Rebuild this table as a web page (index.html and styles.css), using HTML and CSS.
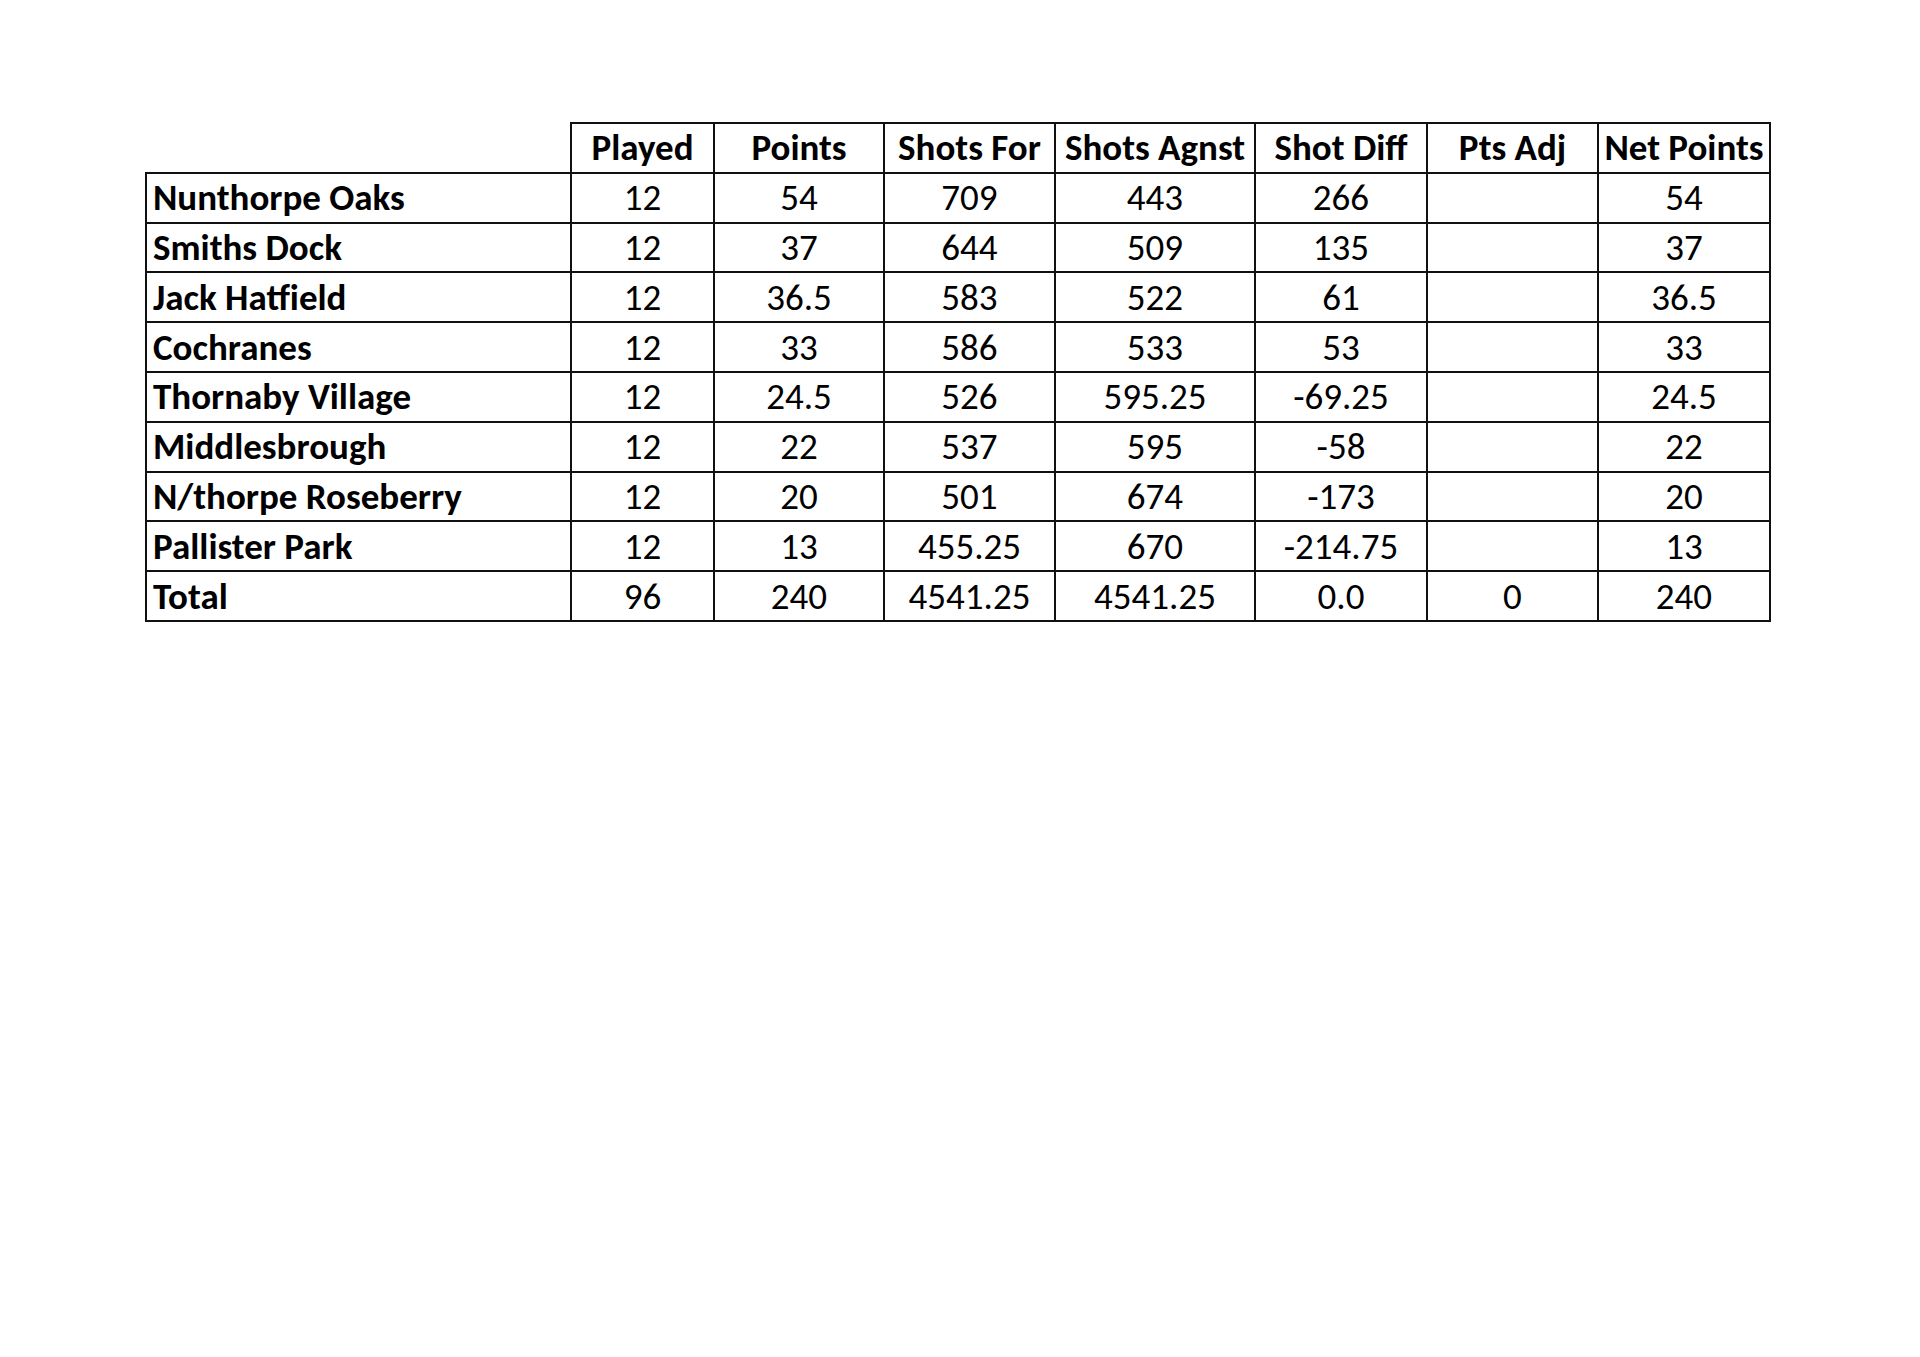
FILE: index.html
```html
<!DOCTYPE html>
<html lang="en">
<head>
<meta charset="utf-8">
<title>League Table</title>
<link rel="stylesheet" href="styles.css">
</head>
<body>
<div class="page">
<table class="league">
<colgroup>
<col class="c-name"><col class="c-played"><col class="c-points"><col class="c-for"><col class="c-agn"><col class="c-diff"><col class="c-adj"><col class="c-net">
</colgroup>
<thead>
<tr><th class="blank"></th><th>Played</th><th>Points</th><th>Shots For</th><th>Shots Agnst</th><th>Shot Diff</th><th>Pts Adj</th><th>Net Points</th></tr>
</thead>
<tbody>
<tr><td class="name">Nunthorpe Oaks</td><td>12</td><td>54</td><td>709</td><td>443</td><td>266</td><td></td><td>54</td></tr>
<tr><td class="name">Smiths Dock</td><td>12</td><td>37</td><td>644</td><td>509</td><td>135</td><td></td><td>37</td></tr>
<tr><td class="name">Jack Hatfield</td><td>12</td><td>36.5</td><td>583</td><td>522</td><td>61</td><td></td><td>36.5</td></tr>
<tr><td class="name">Cochranes</td><td>12</td><td>33</td><td>586</td><td>533</td><td>53</td><td></td><td>33</td></tr>
<tr><td class="name">Thornaby Village</td><td>12</td><td>24.5</td><td>526</td><td>595.25</td><td>-69.25</td><td></td><td>24.5</td></tr>
<tr><td class="name">Middlesbrough</td><td>12</td><td>22</td><td>537</td><td>595</td><td>-58</td><td></td><td>22</td></tr>
<tr><td class="name">N/thorpe Roseberry</td><td>12</td><td>20</td><td>501</td><td>674</td><td>-173</td><td></td><td>20</td></tr>
<tr><td class="name">Pallister Park</td><td>12</td><td>13</td><td>455.25</td><td>670</td><td>-214.75</td><td></td><td>13</td></tr>
<tr><td class="name">Total</td><td>96</td><td>240</td><td>4541.25</td><td>4541.25</td><td>0.0</td><td>0</td><td>240</td></tr>
</tbody>
</table>
</div>
</body>
</html>
```
FILE: styles.css
```css
html, body {
  margin: 0;
  padding: 0;
  background: #ffffff;
}
.page {
  padding: 122px 0 0 145px;
}
.league {
  border-collapse: collapse;
  table-layout: fixed;
  width: 1626px;
  font-family: Carlito, Lato, "Liberation Sans", sans-serif;
  font-size: 37px;
  color: #000;
}
.c-name { width: 425px; }
.c-played { width: 143px; }
.c-points { width: 170px; }
.c-for { width: 171px; }
.c-agn { width: 200px; }
.c-diff { width: 172px; }
.c-adj { width: 171px; }
.c-net { width: 172px; }
.league th,
.league td {
  border: 2px solid #111;
  height: 47.8px;
  padding: 0;
  text-align: center;
  vertical-align: middle;
  white-space: nowrap;
  overflow: visible;
  line-height: 1;
}
.league th {
  font-weight: 700;
}
.league th.blank {
  border: none;
}
.league td {
  font-weight: 400;
}
.league td.name {
  text-align: left;
  font-weight: 700;
  padding-left: 6px;
}
```
